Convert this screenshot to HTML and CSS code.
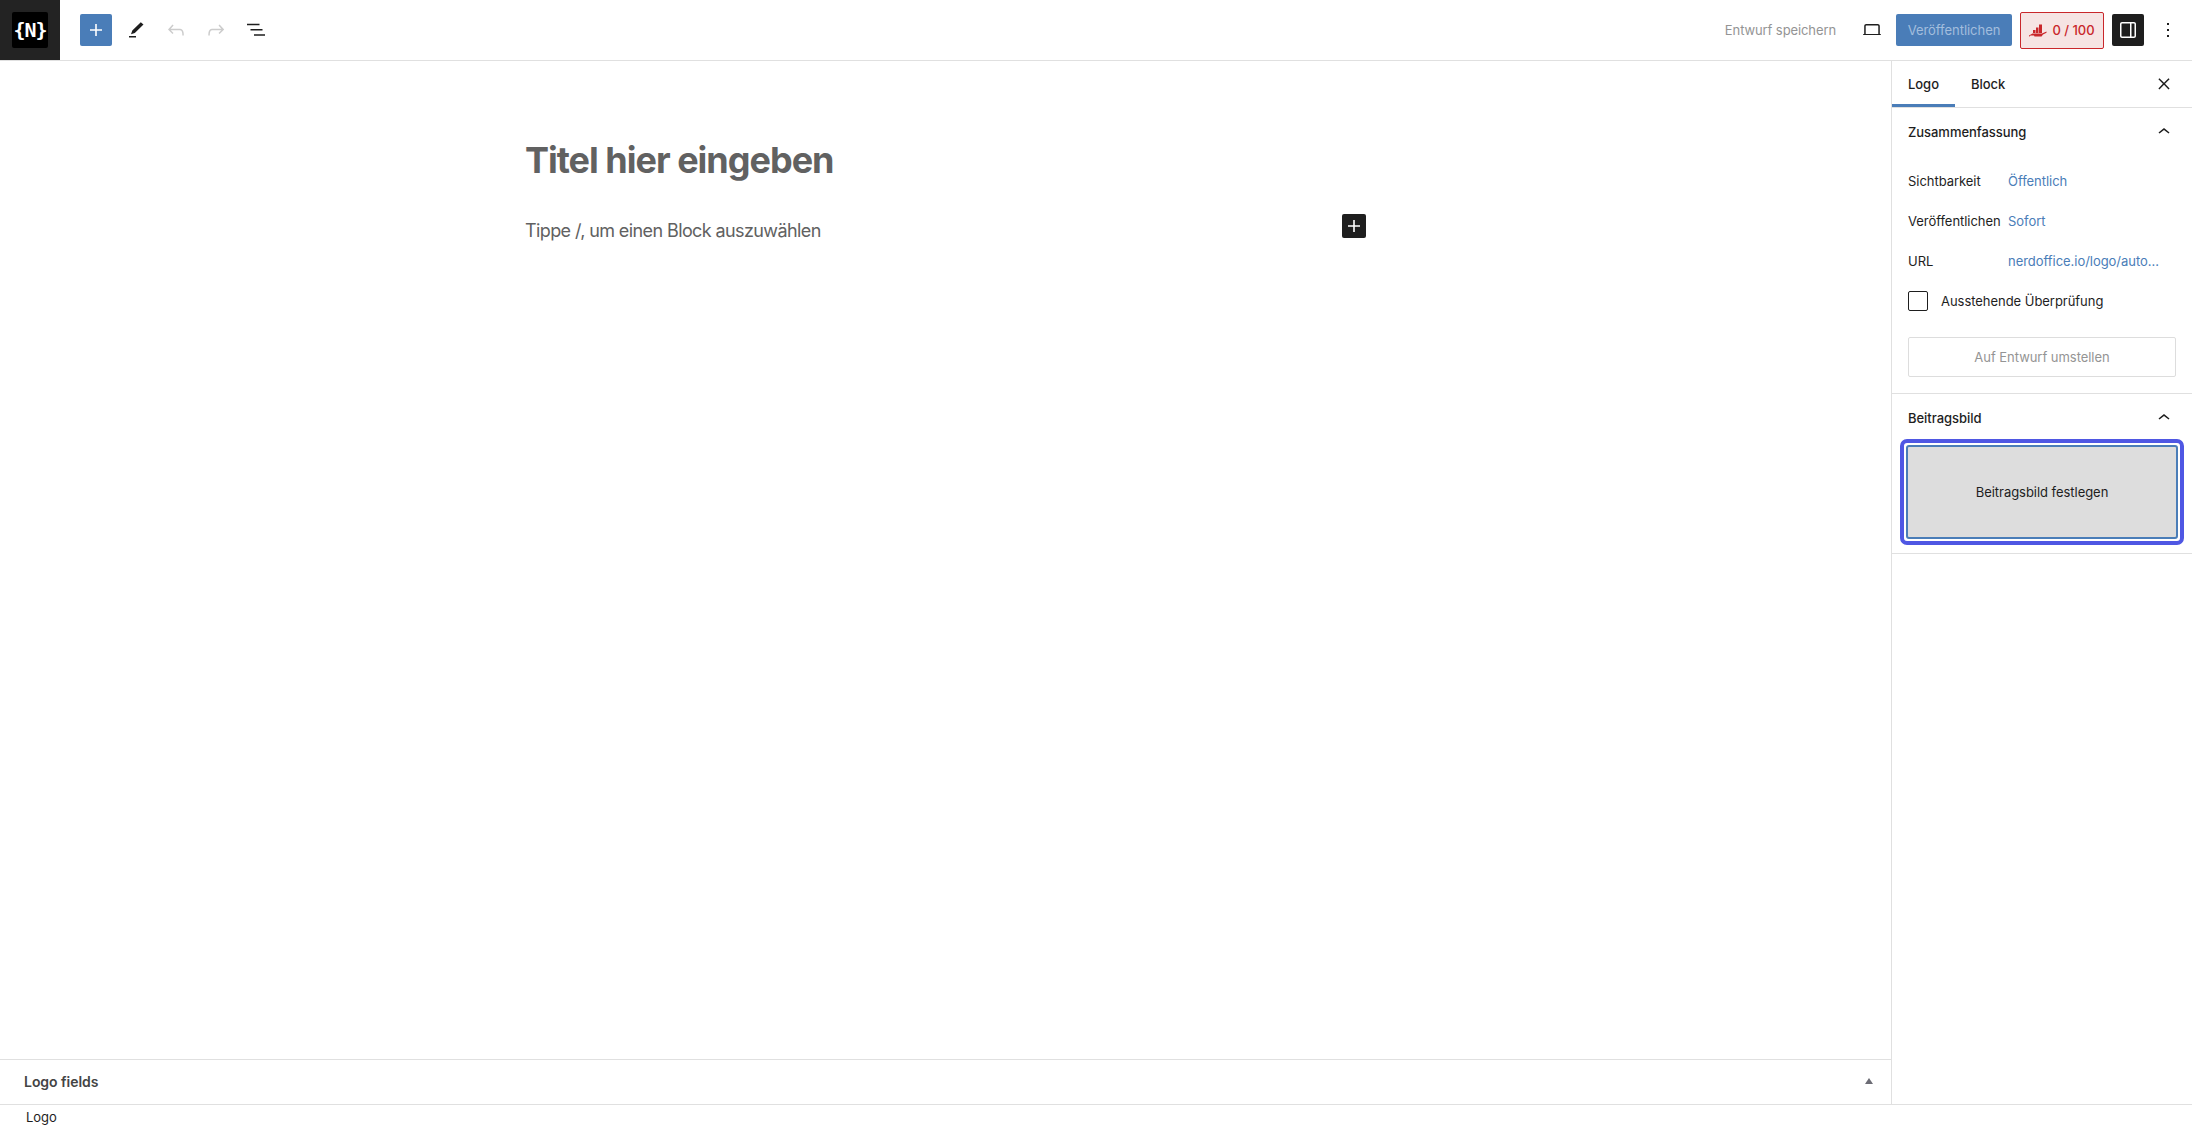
FILE: index.html
```html
<!DOCTYPE html>
<html lang="de">
<head>
    <meta charset="UTF-8">
    <title>Logo bearbeiten</title>
    <link rel="stylesheet" href="styles.css">
</head>
<body>
    <header class="topbar">
        <div class="site-logo"><div class="logo-box">{N}</div></div>
        <div class="tools">
            <button class="add-btn">
                <svg width="24" height="24" viewBox="0 0 24 24"><path d="M18 11.2h-5.200V6h-1.600v5.200H6v1.600h5.200V18h1.600v-5.200H18z" fill="#fff"/></svg>
            </button>
            <button class="icon-btn">
                <svg width="24" height="24" viewBox="0 0 24 24"><path d="M19.500 6.500 16.800 4.300 8.300 12.500l-1.300 3.700 3.800-1.300zM5 19.500h7V18H5z" fill="#1e1e1e"/></svg>
            </button>
            <button class="icon-btn">
                <svg width="24" height="24" viewBox="0 0 24 24"><path d="M18.300 11.700c-.6-.6-1.400-.9-2.300-.9H6.700l2.900-3.300-1.100-1-4.500 5L8.500 16l1-1-2.700-2.700H16c.5 0 .9.2 1.300.5 1 1 1 3.400 1 4.500v.3h1.500v-.2c0-1.500 0-4.300-1.500-5.700z" fill="#ccc"/></svg>
            </button>
            <button class="icon-btn">
                <svg width="24" height="24" viewBox="0 0 24 24"><path d="M15.600 6.500l-1.100 1 2.900 3.300H8c-.9 0-1.700.3-2.300.9-1.400 1.500-1.400 4.200-1.400 5.700v.2h1.500v-.3c0-1.100 0-3.500 1-4.500.3-.3.7-.5 1.300-.5h9.200L14.500 15l1.100 1.100 4.600-4.600-4.600-5z" fill="#ccc"/></svg>
            </button>
            <button class="icon-btn">
                <svg width="24" height="24" viewBox="0 0 24 24"><path d="M3 5.700h12.500v1.500H3zM6.500 11h12v1.500h-12zM10 16.300h11v1.500H10z" fill="#1e1e1e"/></svg>
            </button>
        </div>
        <div class="actions">
            <span class="save-draft">Entwurf speichern</span>
            <button class="icon-btn preview-btn">
                <svg width="24" height="24" viewBox="0 0 24 24"><path d="M20.500 16h-.7V8c0-1.100-.9-2-2-2H6.200c-1.100 0-2 .9-2 2v8h-.7c-.3 0-.5.2-.5.5s.2.5.5.5h17c.3 0 .5-.2.5-.5s-.2-.5-.5-.5zM5.700 8c0-.3.2-.5.5-.5h11.600c.3 0 .5.2.5.5v8H5.700V8z" fill="#1e1e1e"/></svg>
            </button>
            <button class="publish-btn">Veröffentlichen</button>
            <button class="score-btn">
                <svg width="18" height="13" viewBox="0 0 18 13"><path d="M4 6h2.500v3H4zM7 3.500h2.500V9H7zM10 .5h3V9h-3zM0 11.500l3.500-2H13l4.500-2v1.200L14 10.500l-1.500 2H5.500l-.5-1H1.500L.5 12.500H0z" fill="#c9272b"/></svg>
                0 / 100
            </button>
            <button class="settings-btn">
                <svg width="24" height="24" viewBox="0 0 24 24"><path d="M18 4H6c-1.100 0-2 .9-2 2v12c0 1.100.9 2 2 2h12c1.100 0 2-.9 2-2V6c0-1.100-.9-2-2-2zM5.500 18V6c0-.3.2-.5.5-.5h8v13H6c-.3 0-.5-.2-.5-.5zm13 0c0 .3-.2.5-.5.5h-2.500v-13H18c.3 0 .5.2.5.5v12z" fill="#fff"/></svg>
            </button>
            <button class="icon-btn more-btn">
                <svg width="24" height="24" viewBox="0 0 24 24"><path d="M13 19h-2v-2h2v2zm0-6h-2v-2h2v2zm0-6h-2V5h2v2z" fill="#1e1e1e"/></svg>
            </button>
        </div>
    </header>

    <div class="workspace">
        <main class="editor">
            <div class="canvas">
                <div class="writing-flow">
                    <h1 class="post-title">Titel hier eingeben</h1>
                    <div class="block-row">
                        <p class="block-hint">Tippe /, um einen Block auszuwählen</p>
                        <button class="inline-add">
                            <svg width="24" height="24" viewBox="0 0 24 24"><path d="M18 11.200h-5.200V6h-1.600v5.200H6v1.600h5.200V18h1.600v-5.200H18z" fill="#fff"/></svg>
                        </button>
                    </div>
                </div>
            </div>
            <section class="meta-box">
                <h2>Logo fields</h2>
                <span class="meta-arrow"></span>
            </section>
        </main>

        <aside class="sidebar">
            <div class="tabs">
                <span class="tab active">Logo</span>
                <span class="tab">Block</span>
                <button class="icon-btn close-btn">
                    <svg width="24" height="24" viewBox="0 0 24 24"><path d="M13 11.800l4.600-4.600-1.100-1L12 10.700 7.400 6.200l-1 1 4.500 4.600-4.500 4.600 1 1 4.600-4.600 4.500 4.600 1.100-1z" fill="#1e1e1e"/></svg>
                </button>
            </div>

            <section class="panel summary">
                <div class="panel-head">
                    <h2>Zusammenfassung</h2>
                    <svg width="24" height="24" viewBox="0 0 24 24"><path d="M6.500 12.400 12 8l5.500 4.400-.9 1.200L12 10l-4.500 3.600z" fill="#1e1e1e"/></svg>
                </div>
                <div class="panel-row"><span class="row-label">Sichtbarkeit</span><a class="row-value">Öffentlich</a></div>
                <div class="panel-row"><span class="row-label">Veröffentlichen</span><a class="row-value">Sofort</a></div>
                <div class="panel-row"><span class="row-label">URL</span><a class="row-value">nerdoffice.io/logo/auto...</a></div>
                <label class="check-row"><span class="check-box"></span>Ausstehende Überprüfung</label>
                <button class="draft-btn">Auf Entwurf umstellen</button>
            </section>

            <section class="panel featured">
                <div class="panel-head">
                    <h2>Beitragsbild</h2>
                    <svg width="24" height="24" viewBox="0 0 24 24"><path d="M6.500 12.400 12 8l5.500 4.400-.9 1.200L12 10l-4.500 3.600z" fill="#1e1e1e"/></svg>
                </div>
                <div class="focus-ring">
                    <button class="image-btn">Beitragsbild festlegen</button>
                </div>
            </section>
        </aside>
    </div>

    <footer class="breadcrumb">Logo</footer>
</body>
</html>
```

FILE: styles.css
```css
* {
    margin: 0;
    padding: 0;
    box-sizing: border-box;
}

html, body {
    height: 100%;
    overflow: hidden;
}

body {
    display: flex;
    flex-direction: column;
    background: #fff;
    color: #1e1e1e;
    font-family: Inter, "Noto Sans", sans-serif;
    font-size: 13px;
    letter-spacing: -0.04px;
}

button {
    border: none;
    background: none;
    font-family: inherit;
    font-size: 13px;
    letter-spacing: inherit;
    display: flex;
    align-items: center;
    justify-content: center;
}

/* top bar */
.topbar {
    height: 61px;
    flex: none;
    display: flex;
    align-items: center;
    border-bottom: 1px solid #e0e0e0;
}

.site-logo {
    width: 60px;
    height: 60px;
    background: #232323;
    display: flex;
    align-items: center;
    justify-content: center;
}

.logo-box {
    width: 36px;
    height: 36px;
    border-radius: 2px;
    background: #000;
    color: #fff;
    font-family: "DejaVu Sans Mono", monospace;
    font-weight: 700;
    font-size: 20px;
    line-height: 36px;
    text-align: center;
    letter-spacing: -1px;
}

.tools {
    display: flex;
    align-items: center;
    gap: 8px;
    margin-left: 20px;
}

.add-btn {
    width: 32px;
    height: 32px;
    background: #4a7db8;
    border-radius: 2px;
}

.icon-btn {
    width: 32px;
    height: 32px;
}

.actions {
    margin-left: auto;
    display: flex;
    align-items: center;
}

.save-draft {
    color: #949494;
    letter-spacing: -0.1px;
    margin-right: 20px;
}

.preview-btn {
    margin-right: 8px;
}

.publish-btn {
    width: 116px;
    height: 32px;
    background: #4a7db8;
    color: #a3bedd;
    border-radius: 2px;
    margin-right: 8px;
}

.score-btn {
    width: 84px;
    height: 37px;
    gap: 5px;
    background: #f6e4e3;
    border: 1px solid #c9272b;
    border-radius: 2px;
    color: #c9272b;
    font-weight: 500;
    margin-right: 8px;
}

.settings-btn {
    width: 32px;
    height: 32px;
    background: #1e1e1e;
    border-radius: 2px;
    margin-right: 8px;
}

.more-btn {
    margin-right: 8px;
}

/* main area */
.workspace {
    flex: 1;
    display: flex;
    min-height: 0;
    border-bottom: 1px solid #e0e0e0;
}

.editor {
    flex: 1;
    display: flex;
    flex-direction: column;
    min-width: 0;
}

.canvas {
    flex: 1;
}

.writing-flow {
    width: 841px;
    margin-left: 525px;
    padding-top: 76px;
}

.post-title {
    font-size: 36px;
    line-height: 46px;
    font-weight: 700;
    letter-spacing: -1px;
    color: #616161;
}

.block-row {
    margin-top: 33px;
    height: 28px;
    display: flex;
    align-items: center;
    justify-content: space-between;
}

.block-hint {
    font-size: 18px;
    letter-spacing: -0.6px;
    color: #616161;
}

.inline-add {
    width: 24px;
    height: 24px;
    background: #1e1e1e;
    border-radius: 2px;
    margin-top: -8px;
}

.meta-box {
    height: 45px;
    flex: none;
    border-top: 1px solid #e0e0e0;
    display: flex;
    align-items: center;
    justify-content: space-between;
    padding: 0 18px 2px 24px;
}

.meta-box h2 {
    font-size: 14px;
    font-weight: 600;
    color: #444;
}

.meta-arrow {
    width: 0;
    height: 0;
    border-left: 4px solid transparent;
    border-right: 4px solid transparent;
    border-bottom: 6px solid #6c6c75;
}

/* sidebar */
.sidebar {
    width: 301px;
    flex: none;
    border-left: 1px solid #e0e0e0;
}

.tabs {
    height: 47px;
    display: flex;
    align-items: stretch;
    border-bottom: 1px solid #e0e0e0;
}

.tab {
    display: flex;
    align-items: center;
    font-weight: 500;
    padding: 0 16px;
    height: 46px;
}

.tab.active {
    box-shadow: inset 0 -3px 0 #4a7db8;
}

.close-btn {
    margin-left: auto;
    margin-top: 7px;
    margin-right: 12px;
}

.panel {
    border-bottom: 1px solid #e0e0e0;
    padding: 0 16px;
}

.panel-head {
    height: 48px;
    display: flex;
    align-items: center;
    justify-content: space-between;
}

.panel-head h2 {
    font-size: 13px;
    font-weight: 500;
}

.summary {
    height: 286px;
}

.panel-row {
    height: 40px;
    display: flex;
    align-items: center;
}

.summary .panel-head + .panel-row {
    margin-top: 5px;
}

.row-label {
    width: 100px;
}

.row-value {
    color: #4a7db8;
}

.check-row {
    height: 40px;
    display: flex;
    align-items: center;
    gap: 13px;
}

.check-box {
    width: 20px;
    height: 20px;
    border: 1px solid #1e1e1e;
    border-radius: 2px;
}

.draft-btn {
    width: 268px;
    height: 40px;
    margin-top: 16px;
    border: 1px solid #ddd;
    border-radius: 2px;
    color: #949494;
}

.featured {
    height: 160px;
}

.focus-ring {
    width: 284px;
    height: 106px;
    margin: -3px 0 0 -8px;
    padding: 2px;
    border: 4px solid #4f57e3;
    border-radius: 7px;
}

.image-btn {
    width: 100%;
    height: 100%;
    background: #ddd;
    border: 2px solid #4a7db8;
    border-radius: 3px;
    color: #1e1e1e;
}

.breadcrumb {
    height: 24px;
    flex: none;
    padding-left: 26px;
    line-height: 24px;
}
```
